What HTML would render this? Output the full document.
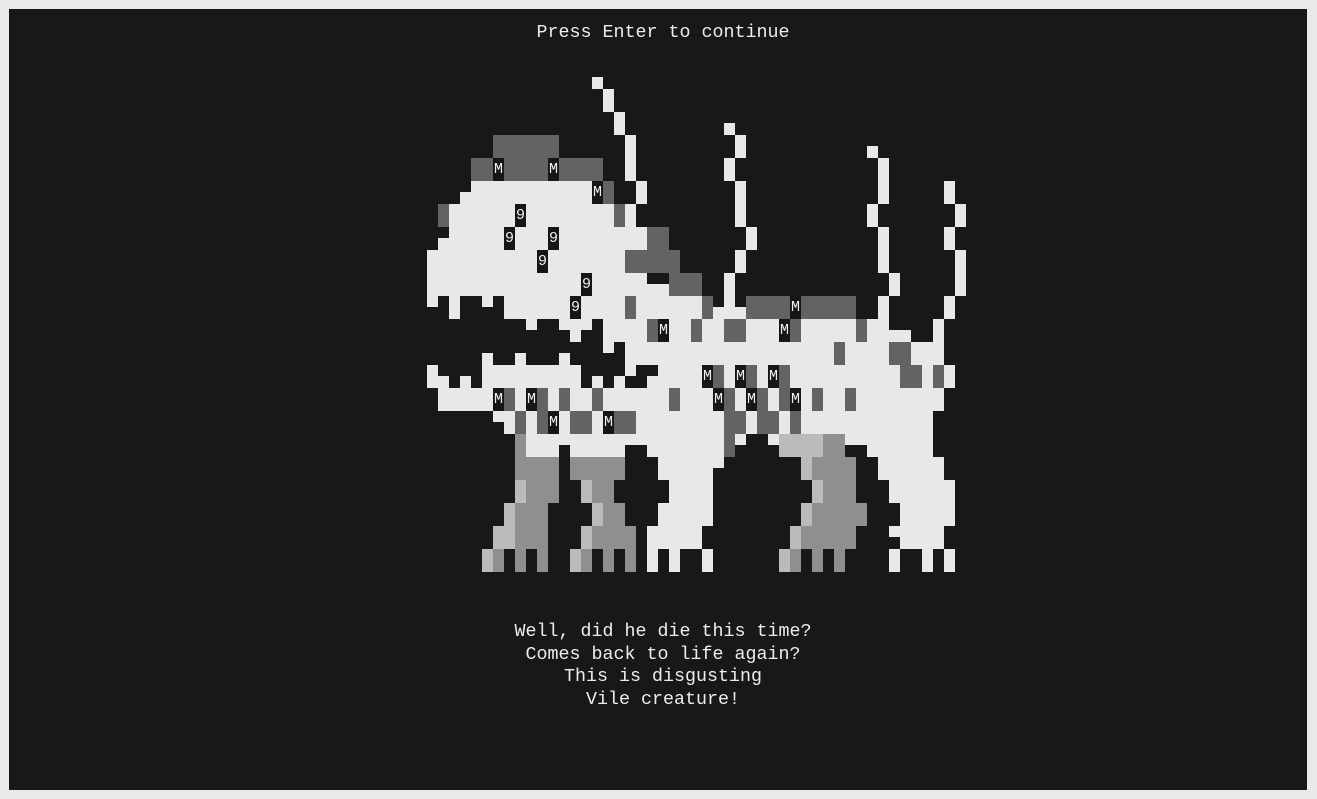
<!DOCTYPE html>
<html><head><meta charset="utf-8">
<style>
html,body{margin:0;padding:0;background:#e9e9e9;width:1317px;height:799px;overflow:hidden}
#p{position:absolute;left:9px;top:9px;width:1298px;height:781px;background:#181818}
.t{position:absolute;left:0;width:1326px;text-align:center;color:#ececec;font-family:"Liberation Mono",monospace;font-size:18.33px;line-height:22.7px;white-space:pre}
#art{position:absolute;left:0;top:0}
.c{position:absolute;width:11px;height:11.5px}
.ch{position:absolute;width:11px;height:23px;background:#161616;color:#f0f0f0;font-family:"Liberation Mono",monospace;font-size:15px;line-height:23px;text-align:center}
</style></head><body>
<div id="p"></div>
<div class="t" style="top:22px">Press Enter to continue</div>
<div class="t" style="top:621px">Well, did he die this time?
Comes back to life again?
This is disgusting
Vile creature!</div>
<div id="art"></div>
<script>
var R=[
"",
"W15",
"W16","W16","W17","W17 W27",
"g6-11 W18 W28",
"g6-11 W18 W28 W40",
"g4-5 M6 g7-10 M11 g12-15 W18 W27 W41",
"g4-5 M6 g7-10 M11 g12-15 W18 W27 W41",
"W4-14 M15 g16 W19 W28 W41 W47",
"W3-14 M15 g16 W19 W28 W41 W47",
"g1 W2-7 98 W9-16 g17 W18 W28 W40 W48",
"g1 W2-7 98 W9-16 g17 W18 W28 W40 W48",
"W2-6 97 W8-10 911 W12-19 g20-21 W29 W41 W47",
"W1-6 97 W8-10 911 W12-19 g20-21 W29 W41 W47",
"W0-9 910 W11-17 g18-22 W28 W41 W48",
"W0-9 910 W11-17 g18-22 W28 W41 W48",
"W0-13 914 W15-19 g22-24 W27 W42 W48",
"W0-13 914 W15-21 g22-24 W27 W42 W48",
"W0 W2 W5 W7-12 913 W14-17 g18 W19-24 g25 W27 g29-32 M33 g34-38 W41 W47",
"W2 W7-12 913 W14-17 g18 W19-24 g25 W26-28 g29-32 M33 g34-38 W41 W47",
"W9 W12-14 W16-19 g20 M21 W22-23 g24 W25-26 g27-28 W29-31 M32 g33 W34-38 g39 W40-41 W46",
"W13 W16-19 g20 M21 W22-23 g24 W25-26 g27-28 W29-31 M32 g33 W34-38 g39 W40-43 W46",
"W16 W18-36 g37 W38-41 g42-43 W44-46",
"W5 W8 W12 W18-36 g37 W38-41 g42-43 W44-46",
"W0 W5-13 W18 W21-24 M25 g26 W27 M28 g29 W30 M31 g32 W33-42 g43-44 W45 g46 W47",
"W0-1 W3 W5-13 W15 W17 W20-24 M25 g26 W27 M28 g29 W30 M31 g32 W33-42 g43-44 W45 g46 W47",
"W1-5 M6 g7 W8 M9 g10 W11 g12 W13-14 g15 W16-21 g22 W23-25 M26 g27 W28 M29 g30 W31 g32 M33 W34 g35 W36-37 g38 W39-46",
"W1-5 M6 g7 W8 M9 g10 W11 g12 W13-14 g15 W16-21 g22 W23-25 M26 g27 W28 M29 g30 W31 g32 M33 W34 g35 W36-37 g38 W39-46",
"W6-7 g8 W9 g10 M11 W12 g13-14 W15 M16 g17-18 W19-26 g27-28 W29 g30-31 W32 g33 W34-45",
"W7 g8 W9 g10 M11 W12 g13-14 W15 M16 g17-18 W19-26 g27-28 W29 g30-31 W32 g33 W34-45",
"m8 W9-26 g27 W28 W31 l32-35 m36-37 W38-45",
"m8 W9-11 W13-17 W20-26 g27 l32-35 m36-37 W40-45",
"m8-11 m13-17 W21-26 l34 m35-38 W41-46",
"m8-11 m13-17 W21-25 l34 m35-38 W41-46",
"l8 m9-11 l14 m15-16 W22-25 l35 m36-38 W42-47",
"l8 m9-11 l14 m15-16 W22-25 l35 m36-38 W42-47",
"l7 m8-10 l15 m16-17 W21-25 l34 m35-39 W43-47",
"l7 m8-10 l15 m16-17 W21-25 l34 m35-39 W43-47",
"l6-7 m8-10 l14 m15-18 W20-24 l33 m34-38 W42-46",
"l6-7 m8-10 l14 m15-18 W20-24 l33 m34-38 W43-46",
"l5 m6 m8 m10 l13 m14 m16 m18 W20 W22 W25 l32 m33 m35 m37 W42 W45 W47",
"l5 m6 m8 m10 l13 m14 m16 m18 W20 W22 W25 l32 m33 m35 m37 W42 W45 W47"
];
var col={W:"#e8e8e8",g:"#636363",m:"#8f8f8f",l:"#bbbbbb"};
var h="";
for(var r=0;r<R.length;r++){
 if(!R[r])continue;
 var segs=R[r].split(" ");
 for(var s=0;s<segs.length;s++){
  var t=segs[s].charAt(0),rg=segs[s].slice(1).split("-");
  var a=+rg[0],b=rg.length>1?+rg[1]:a;
  for(var c=a;c<=b;c++){
   var x=427+11*c,y=65.5+11.5*r;
   if(t=="M"||t=="9"){
     if(r%2==0)h+='<div class="ch" style="left:'+x+'px;top:'+y+'px">'+t+'</div>';
   }else h+='<div class="c" style="left:'+x+'px;top:'+y+'px;background:'+col[t]+'"></div>';
  }
 }
}
document.getElementById("art").innerHTML=h;
</script>
</body></html>
